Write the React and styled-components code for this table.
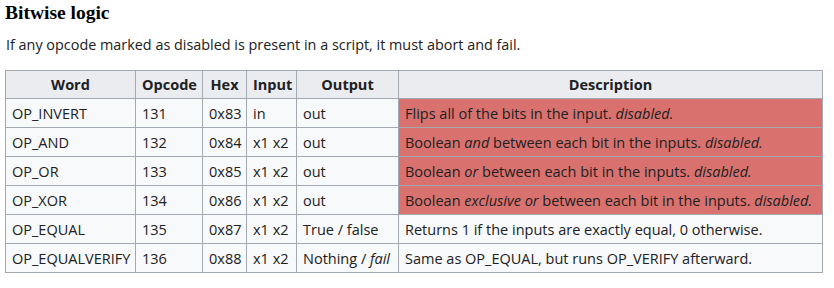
import React from "react";
import styled, { createGlobalStyle } from "styled-components";

const GlobalStyle = createGlobalStyle`
  body {
    margin: 0;
    background: #ffffff;
    font-family: "Open Sans", "Noto Sans", sans-serif;
    color: #202122;
  }
`;

const rows = [
  { word: "OP_INVERT", code: 131, hex: "0x83", input: "in", output: "out", bad: true,
    desc: <>Flips all of the bits in the input. <i>disabled.</i></> },
  { word: "OP_AND", code: 132, hex: "0x84", input: "x1 x2", output: "out", bad: true,
    desc: <>Boolean <i>and</i> between each bit in the inputs. <i>disabled.</i></> },
  { word: "OP_OR", code: 133, hex: "0x85", input: "x1 x2", output: "out", bad: true,
    desc: <>Boolean <i>or</i> between each bit in the inputs. <i>disabled.</i></> },
  { word: "OP_XOR", code: 134, hex: "0x86", input: "x1 x2", output: "out", bad: true,
    desc: <>Boolean <i>exclusive or</i> between each bit in the inputs. <i>disabled.</i></> },
  { word: "OP_EQUAL", code: 135, hex: "0x87", input: "x1 x2", output: "True / false",
    desc: "Returns 1 if the inputs are exactly equal, 0 otherwise." },
  { word: "OP_EQUALVERIFY", code: 136, hex: "0x88", input: "x1 x2", output: <>Nothing / <i>fail</i></>,
    desc: "Same as OP_EQUAL, but runs OP_VERIFY afterward." },
];

function App() {
  return (
    <Page>
      <GlobalStyle />
      <Heading>Bitwise logic</Heading>
      <Intro>If any opcode marked as disabled is present in a script, it must abort and fail.</Intro>
      <Table>
        <thead>
          <tr>
            <Th $w={130}>Word</Th>
            <Th $w={67}>Opcode</Th>
            <Th $w={44}>Hex</Th>
            <Th $w={50}>Input</Th>
            <Th $w={102}>Output</Th>
            <Th $w={424}>Description</Th>
          </tr>
        </thead>
        <tbody>
          {rows.map((r) => (
            <tr key={r.word}>
              <Td>{r.word}</Td>
              <Td>{r.code}</Td>
              <Td>{r.hex}</Td>
              <Td>{r.input}</Td>
              <Td>{r.output}</Td>
              <Td $bad={r.bad}>{r.desc}</Td>
            </tr>
          ))}
        </tbody>
      </Table>
    </Page>
  );
}

const Page = styled.div`
  padding: 1px 5px 0;
`;

const Heading = styled.h3`
  margin: 0;
  font-family: "Liberation Serif", "DejaVu Serif", serif;
  font-weight: bold;
  font-size: 19.5px;
  line-height: 24px;
  color: #000;
`;

const Intro = styled.p`
  margin: 9px 0 0 1px;
  font-size: 14.4px;
  line-height: 22px;
  color: #202122;
`;

const Table = styled.table`
  margin-top: 14px;
  border-collapse: collapse;
  table-layout: fixed;
  width: 818px;
  background: #f8f9fa;
  border: 1px solid #a2a9b1;
  font-size: 14.5px;
  color: #202122;
`;

const Th = styled.th`
  width: ${(p) => p.$w}px;
  background: #eaecf0;
  border: 1px solid #a2a9b1;
  padding: 3px 6px;
  height: 28px;
  box-sizing: border-box;
  font-weight: bold;
  text-align: center;
  line-height: 20px;
`;

const Td = styled.td`
  border: 1px solid #a2a9b1;
  padding: 3px 6px;
  height: 29px;
  box-sizing: border-box;
  line-height: 21px;
  white-space: nowrap;
  background: ${(p) => (p.$bad ? "#d9726f" : "transparent")};
`;

export default App;
